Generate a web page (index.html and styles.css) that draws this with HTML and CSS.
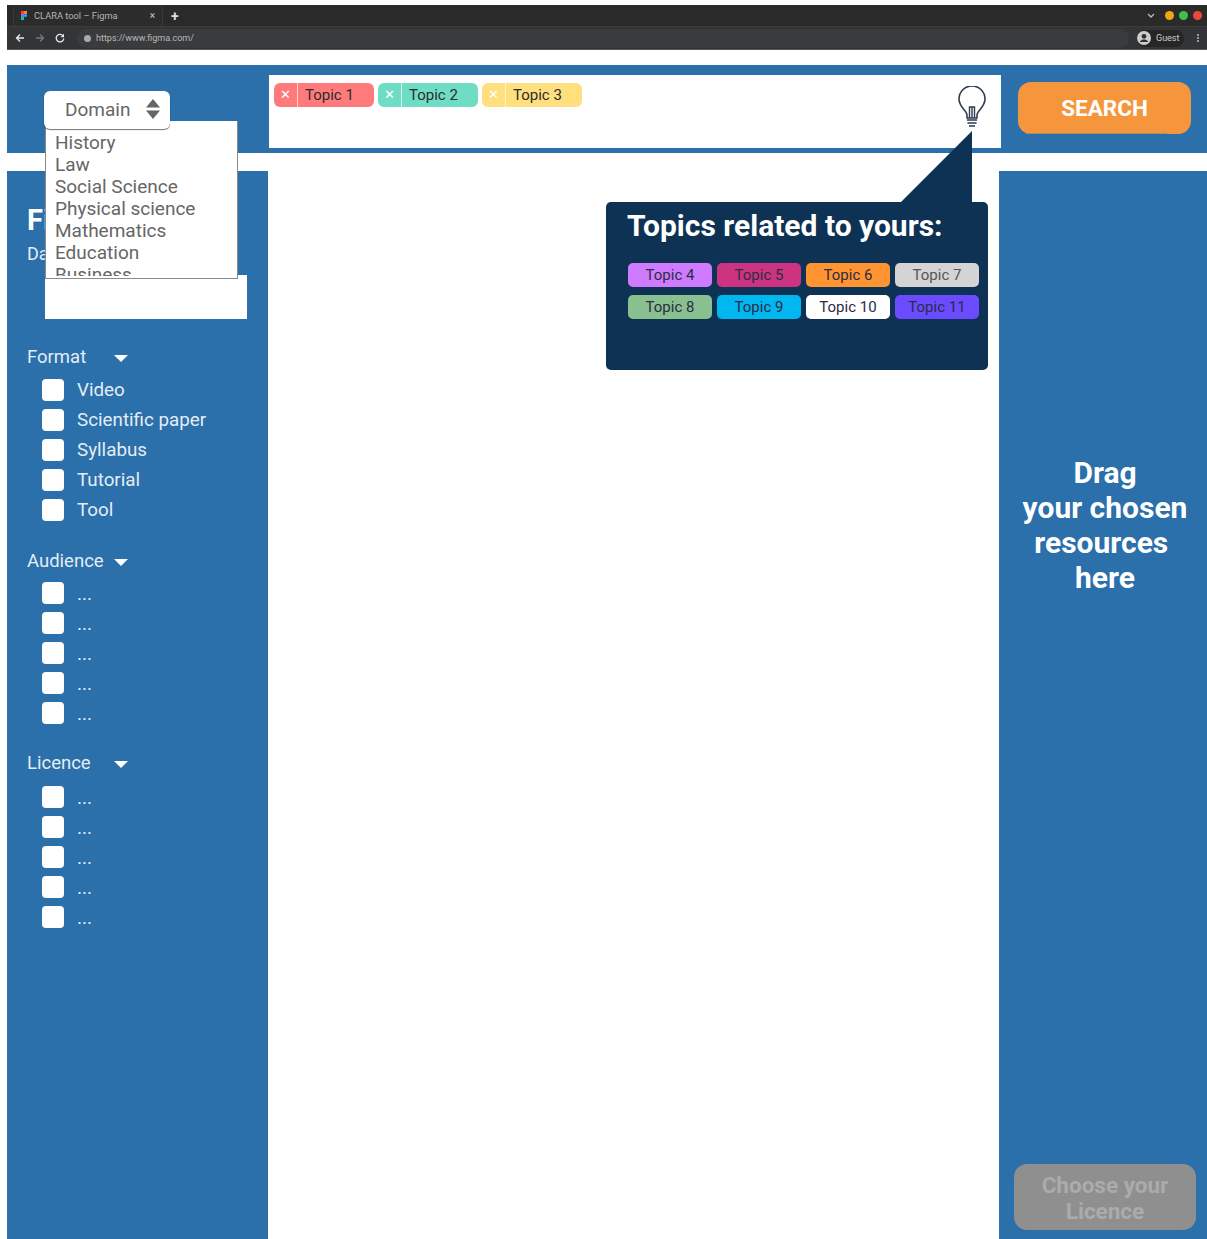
FILE: index.html
```html
<!DOCTYPE html>
<html lang="en">
<head>
<meta charset="utf-8">
<title>CLARA tool - Figma</title>
<link rel="stylesheet" href="styles.css">
</head>
<body>
<div class="page">
  <header class="chrome">
    <div class="tabstrip">
      <div class="tab">
        <svg class="favicon" viewBox="0 0 6 9" width="6" height="9"><rect width="3" height="3" fill="#f24e1e"/><rect x="3" width="3" height="3" fill="#ff7262"/><rect y="3" width="3" height="3" fill="#a259ff"/><circle cx="4.500" cy="4.500" r="1.500" fill="#1abcfe"/><rect y="6" width="3" height="3" fill="#0acf83"/></svg>
        <span class="tab-title">CLARA tool – Figma</span>
        <span class="tab-close">×</span>
      </div>
      <span class="tab-new">+</span>
      <div class="window-controls">
        <svg viewBox="0 0 8 5" width="8" height="5"><path d="M1 1l3 3 3-3" fill="none" stroke="#bbb" stroke-width="1.300"/></svg>
        <i class="dot dot-yellow"></i><i class="dot dot-green"></i><i class="dot dot-red"></i>
      </div>
    </div>
    <div class="toolbar">
      <svg class="nav" viewBox="0 0 10 10" width="10" height="10"><path d="M9 5H2M5 1.500L1.500 5 5 8.500" fill="none" stroke="#e8e8e8" stroke-width="1.300"/></svg>
      <svg class="nav" viewBox="0 0 10 10" width="10" height="10"><path d="M1 5h7M5 1.500L8.500 5 5 8.500" fill="none" stroke="#777" stroke-width="1.300"/></svg>
      <svg class="nav" viewBox="0 0 10 10" width="10" height="10"><path d="M8.300 3.200A3.800 3.800 0 1 0 8.800 5.500" fill="none" stroke="#e8e8e8" stroke-width="1.300"/><path d="M9 .8v3.400H5.600z" fill="#e8e8e8"/></svg>
      <div class="url">
        <i class="globe"></i>
        <span class="url-text">https://www.figma.com/</span>
      </div>
      <div class="profile">
        <svg viewBox="0 0 14 14" width="14" height="14"><circle cx="7" cy="7" r="7" fill="#ccc"/><circle cx="7" cy="5.300" r="2.400" fill="#303030"/><path d="M2.800 11c1-1.900 2.500-2.500 4.200-2.500s3.200.6 4.200 2.500" fill="#303030"/></svg>
        <span>Guest</span>
      </div>
      <div class="kebab"><i></i><i></i><i></i></div>
    </div>
  </header>

  <section class="topbar">
    <div class="searchbox">
      <div class="chip chip-red"><span class="chip-x">✕</span><span class="chip-label">Topic 1</span></div>
      <div class="chip chip-teal"><span class="chip-x">✕</span><span class="chip-label">Topic 2</span></div>
      <div class="chip chip-yellow"><span class="chip-x">✕</span><span class="chip-label">Topic 3</span></div>
      <svg class="bulb" viewBox="0 0 30 46" width="30" height="46">
        <path d="M10 32v-3c0-4-8-8-8-16a13 13 0 0 1 26 0c0 8-8 12-8 16v3z" fill="#fff" stroke="#2d3e4f" stroke-width="1.600"/>
        <path d="M12.500 32V21h5v11M15 21v11" fill="none" stroke="#2d3e4f" stroke-width="1.400"/>
        <path d="M10 34h10M10.500 37h9M12 40h6" stroke="#5b6b78" stroke-width="2" fill="none"/>
      </svg>
    </div>
    <button class="search-btn" type="button">SEARCH</button>
  </section>

  <main class="workspace">
    <aside class="filters">
      <h2 class="filters-title">Filters</h2>
      <p class="date-label">Date</p>
      <div class="date-input"></div>

      <h3 class="group-head group-format"><span class="group-name">Format</span><i class="caret"></i></h3>
      <ul class="checks checks-format">
        <li><i class="box"></i>Video</li>
        <li><i class="box"></i>Scientific paper</li>
        <li><i class="box"></i>Syllabus</li>
        <li><i class="box"></i>Tutorial</li>
        <li><i class="box"></i>Tool</li>
      </ul>

      <h3 class="group-head group-audience"><span class="group-name">Audience</span><i class="caret"></i></h3>
      <ul class="checks checks-audience">
        <li class="muted"><i class="box"></i><span>...</span></li>
        <li class="muted"><i class="box"></i><span>...</span></li>
        <li class="muted"><i class="box"></i><span>...</span></li>
        <li class="muted"><i class="box"></i><span>...</span></li>
        <li class="muted"><i class="box"></i><span>...</span></li>
      </ul>

      <h3 class="group-head group-licence"><span class="group-name">Licence</span><i class="caret"></i></h3>
      <ul class="checks checks-licence">
        <li class="muted"><i class="box"></i><span>...</span></li>
        <li class="muted"><i class="box"></i><span>...</span></li>
        <li class="muted"><i class="box"></i><span>...</span></li>
        <li class="muted"><i class="box"></i><span>...</span></li>
        <li class="muted"><i class="box"></i><span>...</span></li>
      </ul>
    </aside>

    <div class="canvas"></div>

    <aside class="dropzone">
      <p class="drop-text">Drag
your chosen
resources 
here</p>
      <button class="licence-btn" type="button">Choose your Licence</button>
    </aside>
  </main>

  <!-- Domain picker, open over the top bar and the filters -->
  <div class="domain-list">
    <div class="domain-scroll">
      <div>History</div>
      <div>Law</div>
      <div>Social Science</div>
      <div>Physical science</div>
      <div>Mathematics</div>
      <div>Education</div>
      <div>Business</div>
    </div>
  </div>
  <div class="domain-select">
    <span>Domain</span>
    <svg viewBox="0 0 14 20" width="14" height="20"><path d="M7 0l7 8.500H0zM7 20l7-8.500H0z" fill="#666"/></svg>
  </div>

  <!-- Suggestions callout, with its pointer running up to the bulb -->
  <svg class="pointer" viewBox="0 0 72 72" width="72" height="72"><path d="M72 0V72H0z" fill="#0d3254"/></svg>
  <div class="related">
    <h2 class="related-title">Topics related to yours:</h2>
    <div class="related-grid">
      <span class="tag tag-purple">Topic 4</span>
      <span class="tag tag-magenta">Topic 5</span>
      <span class="tag tag-orange">Topic 6</span>
      <span class="tag tag-grey">Topic 7</span>
      <span class="tag tag-green">Topic 8</span>
      <span class="tag tag-cyan">Topic 9</span>
      <span class="tag tag-white">Topic 10</span>
      <span class="tag tag-violet">Topic 11</span>
    </div>
  </div>
</div>
</body>
</html>
```
FILE: styles.css
```css
* { box-sizing: border-box; }

html, body {
  margin: 0;
  height: 100%;
  background: #fff;
  overflow: hidden;
}

body {
  font-family: Roboto, "Liberation Sans", sans-serif;
}

.page {
  position: relative;
  height: 1239px;
  padding: 5px 0 0 7px;
  display: flex;
  flex-direction: column;
  overflow: hidden;
}

/* Browser frame */
.chrome {
  height: 45px;
  flex: none;
  background: #333436;
  border-bottom: 1px solid #555;
}

.tabstrip {
  height: 22px;
  background: #2a2a2a;
  display: flex;
  align-items: center;
  border-bottom: 1px solid #3c3c3c;
}

.tab {
  width: 150px;
  height: 21px;
  margin-left: 6px;
  padding: 0 7px;
  display: flex;
  align-items: center;
  gap: 7px;
  background: #2c2c2c;
  border-radius: 5px 5px 0 0;
  border-right: 1px solid #3a3a3a;
  border-left: 1px solid #3a3a3a;
}

.tab-title {
  font-size: 9.300px;
  color: #b5b5b5;
  white-space: nowrap;
  flex: 1;
}

.tab-close {
  font-size: 10px;
  color: #ccc;
}

.tab-new {
  margin-left: 8px;
  font-size: 14px;
  font-weight: 700;
  color: #ddd;
}

.window-controls {
  margin-left: auto;
  padding-right: 5px;
  display: flex;
  align-items: center;
  gap: 5px;
}

.window-controls svg { margin-right: 5px; }

.dot {
  width: 9px;
  height: 9px;
  border-radius: 50%;
}

.dot-yellow { background: #eea615; }
.dot-green { background: #3fc04a; }
.dot-red { background: #e8483f; }

.toolbar {
  height: 22px;
  padding-left: 8px;
  display: flex;
  align-items: center;
  gap: 10px;
}

.nav { flex: none; }

.url {
  flex: none;
  width: 1052px;
  height: 19px;
  margin-left: 2px;
  padding-left: 7px;
  display: flex;
  align-items: center;
  gap: 5px;
  background: #3a3b3c;
  border-radius: 10px;
}

.globe {
  width: 7px;
  height: 7px;
  border-radius: 50%;
  background: #aaa;
}

.url-text {
  font-size: 9px;
  color: #b8b8b8;
}

.profile {
  margin-left: -2px;
  height: 17px;
  padding: 0 5px 0 0;
  display: flex;
  align-items: center;
  gap: 5px;
  font-size: 9px;
  color: #ccc;
  background: #262626;
  border-radius: 9px;
}

.kebab {
  margin-left: 3px;
  display: flex;
  flex-direction: column;
  gap: 1px;
}

.kebab i {
  width: 2px;
  height: 2px;
  background: #999;
}

/* Search row */
.topbar {
  height: 88px;
  flex: none;
  margin-top: 15px;
  padding-top: 10px;
  display: flex;
  align-items: flex-start;
  background: #2b6fab;
}

.searchbox {
  width: 732px;
  height: 73px;
  margin-left: 262px;
  padding: 8px 0 0 5px;
  display: flex;
  align-items: flex-start;
  gap: 4px;
  position: relative;
  background: #fff;
}

.chip {
  width: 100px;
  height: 24px;
  display: flex;
  align-items: center;
  border-radius: 6px;
  font-size: 15px;
  color: #2c2c2c;
}

.chip-x {
  width: 24px;
  height: 24px;
  flex: none;
  line-height: 24px;
  text-align: center;
  font-size: 13px;
  color: #fff;
  border-right: 1px solid rgba(255, 255, 255, .65);
}

.chip-label { padding-left: 7px; }

.chip-red { background: #ff7b7b; }
.chip-teal { background: #6fdcc4; }
.chip-yellow { background: #ffdf7e; }

.bulb {
  position: absolute;
  right: 14px;
  top: 11px;
}

.search-btn {
  position: relative;
  width: 173px;
  height: 52px;
  margin: 7px 0 0 17px;
  padding: 0;
  border: 0;
  border-radius: 13px;
  background: #f6963c;
  color: #fff;
  font: 700 22.500px Roboto, "Liberation Sans", sans-serif;
}

/* Worn edge along the bottom of the button */
.search-btn::after {
  content: "";
  position: absolute;
  left: 8px;
  bottom: 0;
  width: 141px;
  height: 1px;
  background: #b78a5c;
}

/* Three working columns */
.workspace {
  flex: 1;
  min-height: 0;
  margin-top: 18px;
  display: flex;
}

.filters {
  width: 261px;
  flex: none;
  padding: 34px 0 0 20px;
  background: #2b6fab;
  color: #e3edf5;
}

.filters-title {
  margin: 0;
  height: 30px;
  font-size: 29px;
  line-height: 30px;
  font-weight: 700;
  color: #fff;
}

.date-label {
  margin: 8px 0 0;
  height: 22px;
  font-size: 18px;
  line-height: 22px;
}

.date-input {
  width: 202px;
  height: 44px;
  margin: 10px 0 0 18px;
  background: #fff;
}

.group-head {
  margin: 0;
  height: 22px;
  display: flex;
  align-items: center;
  font-size: 18.500px;
  font-weight: 400;
}

.group-format { margin-top: 27px; }
.group-audience { margin-top: 25px; }
.group-licence { margin-top: 24px; }

.group-name { width: 87px; }

.caret {
  width: 0;
  height: 0;
  margin-top: 2px;
  border-left: 7px solid transparent;
  border-right: 7px solid transparent;
  border-top: 7px solid #fff;
}

.checks {
  list-style: none;
  margin: 0;
  padding: 0 0 0 15px;
  font-size: 18.800px;
}

.checks-format { margin-top: 7px; }
.checks-audience { margin-top: 6px; }
.checks-licence { margin-top: 8px; }

.checks li {
  height: 30px;
  display: flex;
  align-items: center;
}

.box {
  width: 22px;
  height: 22px;
  flex: none;
  margin-right: 13px;
  background: #fff;
  border-radius: 4px;
}

.muted { font-size: 19px; }
.checks .muted span { margin-top: 2px; line-height: 20px; }

.canvas {
  flex: 1;
  background: #fff;
}

.dropzone {
  width: 208px;
  flex: none;
  padding: 284px 0 9px 4px;
  display: flex;
  flex-direction: column;
  align-items: center;
  background: #2b6fab;
}

.drop-text {
  margin: 0;
  font-size: 30px;
  line-height: 35px;
  font-weight: 700;
  color: #fff;
  text-align: center;
  white-space: pre;
}

.licence-btn {
  width: 182px;
  height: 66px;
  margin-top: auto;
  padding: 2px 20px 0;
  border: 0;
  border-radius: 13px;
  background: #8f8f8f;
  color: #ababab;
  font: 700 22.500px/26px Roboto, "Liberation Sans", sans-serif;
}

/* Domain picker */
.domain-select {
  position: absolute;
  left: 44px;
  top: 91px;
  width: 126px;
  height: 38px;
  padding: 0 10px 2px 21px;
  display: flex;
  align-items: center;
  justify-content: space-between;
  background: #fff;
  border-radius: 6px;
  box-shadow: 0 1px 1px rgba(0, 0, 0, .55);
  font-size: 19px;
  color: #666;
}

.domain-list {
  position: absolute;
  left: 45px;
  top: 121px;
  width: 193px;
  height: 158px;
  padding: 11px 0 0 9px;
  background: #fff;
  border: 1px solid #8a8a8a;
  border-top: 0;
  overflow: hidden;
  font-size: 19px;
  line-height: 22px;
  color: #666;
}

.domain-scroll { height: 144px; overflow: hidden; }

/* Suggestions callout */
.pointer {
  position: absolute;
  left: 900px;
  top: 131px;
}

.related {
  position: absolute;
  left: 606px;
  top: 202px;
  width: 382px;
  height: 168px;
  padding: 6px 9px 0 21px;
  background: #0d3254;
  border-radius: 5px;
}

.related-title {
  margin: 0;
  font-size: 30px;
  line-height: 36px;
  font-weight: 700;
  color: #fff;
  white-space: nowrap;
}

.related-grid {
  margin: 19px 0 0 1px;
  display: grid;
  grid-template-columns: repeat(4, 84px);
  grid-auto-rows: 24px;
  column-gap: 5px;
  row-gap: 8px;
}

.tag {
  display: flex;
  align-items: center;
  justify-content: center;
  border-radius: 5px;
  font-size: 15px;
  color: #2c2c44;
}

.tag-purple { background: #cf7bff; }
.tag-magenta { background: #cc3381; }
.tag-orange { background: #ff9431; }
.tag-grey { background: #d4d4d4; color: #555; }
.tag-green { background: #88c08f; }
.tag-cyan { background: #00b7f0; }
.tag-white { background: #fff; }
.tag-violet { background: #6a4bff; }
```
